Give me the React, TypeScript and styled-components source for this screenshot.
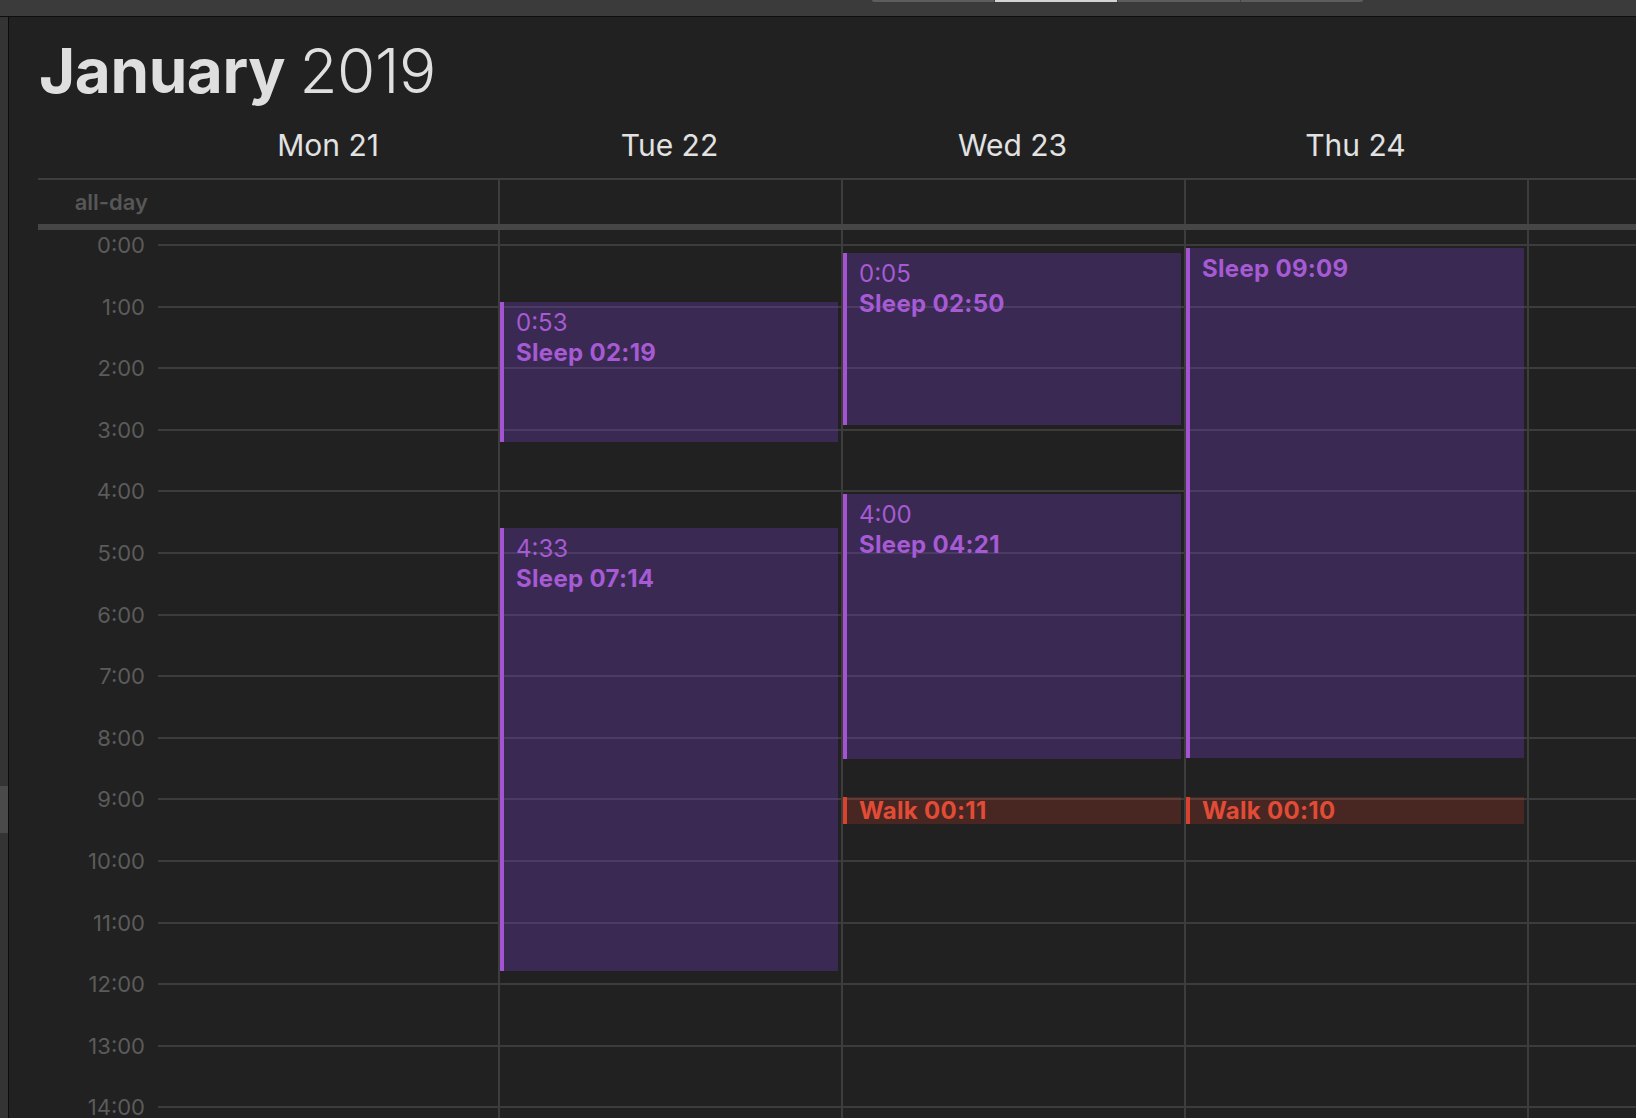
import React from "react";
import styled, { createGlobalStyle } from "styled-components";

const HOUR = 61.6;

type Kind = "sleep" | "walk";
interface CalEvent {
  start: number; // minutes from 0:00
  end: number;
  time?: string;
  title: string;
  kind: Kind;
  minHeight?: number;
}

const days: { name: string; events: CalEvent[] }[] = [
  { name: "Mon 21", events: [] },
  {
    name: "Tue 22",
    events: [
      { start: 53, end: 192, time: "0:53", title: "Sleep 02:19", kind: "sleep" },
      { start: 273, end: 707, time: "4:33", title: "Sleep 07:14", kind: "sleep" },
    ],
  },
  {
    name: "Wed 23",
    events: [
      { start: 5, end: 175, time: "0:05", title: "Sleep 02:50", kind: "sleep" },
      { start: 240, end: 501, time: "4:00", title: "Sleep 04:21", kind: "sleep" },
      { start: 535, end: 546, title: "Walk 00:11", kind: "walk", minHeight: 27 },
    ],
  },
  {
    name: "Thu 24",
    events: [
      { start: 0, end: 500, title: "Sleep 09:09", kind: "sleep" },
      { start: 535, end: 545, title: "Walk 00:10", kind: "walk", minHeight: 27 },
    ],
  },
  { name: "", events: [] },
];

const hours = Array.from({ length: 15 }, (_, i) => `${i}:00`);

const GlobalStyle = createGlobalStyle`
  html, body { margin: 0; padding: 0; background: #212121; }
  body { font-family: Inter, "Noto Sans", "Liberation Sans", sans-serif; -webkit-font-smoothing: antialiased; }
  #root { width: 1636px; height: 1118px; overflow: hidden; }
`;

const Page = styled.div`
  width: 1636px;
  height: 1118px;
  display: flex;
  flex-direction: column;
  overflow: hidden;
  background: #212121;
`;

const Toolbar = styled.div`
  flex: none;
  box-sizing: border-box;
  height: 17px;
  background: #3b3b3b;
  border-bottom: 1px solid #0e0e0e;
  display: flex;
  align-items: flex-start;
  padding-left: 872px;
`;

const Segmented = styled.div`
  display: flex;
  height: 2px;
  border-radius: 0 0 4px 4px;
  overflow: hidden;
`;

const Segment = styled.div<{ $selected?: boolean }>`
  width: 122px;
  height: 2px;
  background: ${(p) => (p.$selected ? "#d4d4d4" : "#5d5d5d")};
  & + & {
    border-left: 1px solid #444;
  }
`;

const Body = styled.div`
  flex: 1;
  min-height: 0;
  display: flex;
`;

const SideStrip = styled.div`
  flex: none;
  width: 8px;
  background: #343434;
  border-right: 1px solid #0c0c0c;
  display: flex;
  flex-direction: column;
`;

const ScrollThumb = styled.div`
  margin-top: 769px;
  height: 47px;
  background: #4a4a4a;
`;

const Main = styled.div`
  flex: 1;
  min-width: 0;
  padding-left: 29px;
  display: flex;
  flex-direction: column;
  overflow: hidden;
`;

const Title = styled.h1`
  margin: 23px 0 0 1px;
  font-size: 62px;
  line-height: 62px;
  color: #dfdfdf;
  letter-spacing: -0.4px;
  white-space: nowrap;
`;

const Month = styled.span`
  font-weight: 700;
`;

const Year = styled.span`
  font-weight: 300;
`;

const gridCols = "120px 340px repeat(4, 343px)";

const HeaderRow = styled.div`
  display: grid;
  grid-template-columns: ${gridCols};
  padding: 28px 0 18px;
  border-bottom: 2px solid #3e3e3e;
`;

const DayName = styled.div`
  text-align: center;
  font-size: 30px;
  line-height: 30px;
  font-weight: 400;
  color: #e2e2e2;
  white-space: nowrap;
`;

const AllDayRow = styled.div`
  display: grid;
  grid-template-columns: ${gridCols};
  height: 44px;
`;

const AllDayLabel = styled.div`
  text-align: right;
  padding-right: 10px;
  font-size: 22px;
  font-weight: 600;
  line-height: 44px;
  color: #575757;
`;

const AllDayCell = styled.div<{ $first?: boolean }>`
  border-left: ${(p) => (p.$first ? "none" : "2px solid #3d3d3d")};
`;

const ThickRule = styled.div`
  flex: none;
  height: 6px;
  background: #464646;
`;

const Timeline = styled.div`
  flex: 1;
  min-height: 0;
  display: grid;
  grid-template-columns: ${gridCols};
  overflow: hidden;
`;

const Gutter = styled.div`
  padding-top: 4px;
`;

const HourLabel = styled.div`
  box-sizing: border-box;
  height: ${HOUR}px;
  padding-right: 13px;
  text-align: right;
  font-size: 22px;
  line-height: 22px;
  color: #5b5b5b;
`;

const DayColumn = styled.div<{ $first?: boolean }>`
  position: relative;
  padding-top: 14px;
  border-left: ${(p) => (p.$first ? "none" : "2px solid #3d3d3d")};
`;

const HourSlot = styled.div`
  box-sizing: border-box;
  height: ${HOUR}px;
  border-top: 2px solid #3c3c3c;
`;

const EventBlock = styled.div<{ $kind: Kind }>`
  position: absolute;
  left: 0;
  right: 3px;
  box-sizing: border-box;
  overflow: hidden;
  padding: ${(p) => (p.$kind === "walk" ? "1px 0 0 12px" : "6px 0 0 12px")};
  background: ${(p) =>
    p.$kind === "walk" ? "rgba(230, 60, 40, 0.2)" : "rgba(116, 60, 196, 0.3)"};
  border-left: 4px solid ${(p) => (p.$kind === "walk" ? "#d9432e" : "#a553d2")};
  color: ${(p) => (p.$kind === "walk" ? "#e24c36" : "#a65ad4")};
  font-size: 24px;
  line-height: ${(p) => (p.$kind === "walk" ? "25px" : "30px")};
  white-space: nowrap;
`;

const EventTime = styled.div`
  font-weight: 400;
`;

const EventTitle = styled.div`
  font-weight: 700;
  letter-spacing: 0.3px;
`;

function eventBox(ev: CalEvent) {
  const top = 18 + (ev.start / 60) * HOUR;
  const bottom = 15 + (ev.end / 60) * HOUR;
  const height = Math.max(bottom - top, ev.minHeight ?? 0);
  return { top, height };
}

export default function App() {
  return (
    <>
      <GlobalStyle />
      <Page>
        <Toolbar>
          <Segmented>
            <Segment />
            <Segment $selected />
            <Segment />
            <Segment />
          </Segmented>
        </Toolbar>
        <Body>
          <SideStrip>
            <ScrollThumb />
          </SideStrip>
          <Main>
            <Title>
              <Month>January</Month> <Year>2019</Year>
            </Title>
            <HeaderRow>
              <div />
              {days.map((d, i) => (
                <DayName key={i}>{d.name}</DayName>
              ))}
            </HeaderRow>
            <AllDayRow>
              <AllDayLabel>all-day</AllDayLabel>
              {days.map((d, i) => (
                <AllDayCell key={i} $first={i === 0} />
              ))}
            </AllDayRow>
            <ThickRule />
            <Timeline>
              <Gutter>
                {hours.map((h) => (
                  <HourLabel key={h}>{h}</HourLabel>
                ))}
              </Gutter>
              {days.map((d, i) => (
                <DayColumn key={i} $first={i === 0}>
                  {hours.map((h) => (
                    <HourSlot key={h} />
                  ))}
                  {d.events.map((ev, j) => {
                    const box = eventBox(ev);
                    return (
                      <EventBlock
                        key={j}
                        $kind={ev.kind}
                        style={{ top: box.top, height: box.height }}
                      >
                        {ev.time && <EventTime>{ev.time}</EventTime>}
                        <EventTitle>{ev.title}</EventTitle>
                      </EventBlock>
                    );
                  })}
                </DayColumn>
              ))}
            </Timeline>
          </Main>
        </Body>
      </Page>
    </>
  );
}
